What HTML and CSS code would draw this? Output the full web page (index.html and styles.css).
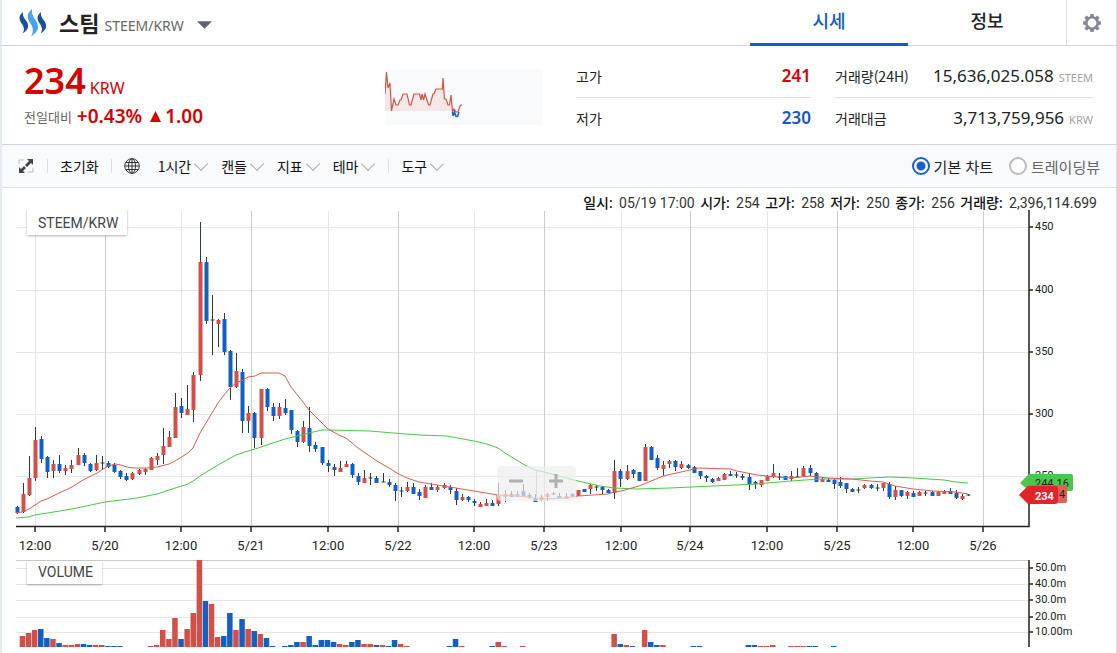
FILE: index.html
```html
<!DOCTYPE html>
<html lang="ko">
<head>
<meta charset="utf-8">
<title>스팀 STEEM/KRW</title>
<link rel="stylesheet" href="styles.css">
</head>
<body>
<main class="panel">
  <header class="head">
    <button class="coin" type="button">
      <svg class="coin-logo" viewBox="0 0 28 28" aria-hidden="true">
        <path fill="#1a5099" d="M4 3C-1 7 0 11 3 15c2.500 3.500 2.500 6.500.5 9.500 6.500-4 7-8 3.500-13C4.500 8.500 3.500 6 4 3zM22 3c-5 4-4 8-1 12 2.500 3.500 2.500 6.500.5 9.500 6.500-4 7-8 3.500-13C22.500 8.500 21.500 6 22 3z"/>
        <path fill="#4ba2f2" d="M13 0C7 4.500 8 9.500 11.500 14.500c3 4.500 3 9 .5 13 8-5 8.500-10.500 4.500-16.500C13.500 7 12.500 4 13 0z"/>
      </svg>
      <strong class="coin-name">스팀</strong>
      <span class="coin-pair">STEEM/KRW</span>
      <svg class="coin-arrow" viewBox="0 0 16 8" aria-hidden="true"><path d="M0 0h16L8 8z"/></svg>
    </button>
    <nav class="tabs">
      <a class="tab tab-on" href="#price">시세</a>
      <a class="tab" href="#info">정보</a>
    </nav>
    <button class="gear" type="button" aria-label="설정">
      <svg viewBox="0 0 20 20" aria-hidden="true">
        <path fill="#858993" fill-rule="evenodd" d="M8.400 1h3.200l.4 2.400 1.400.6 2-1.500 2.200 2.200L16.100 6.700l.6 1.400 2.300.400v3.100l-2.300.400-.6 1.400 1.500 2-2.200 2.200-2-1.500-1.400.6-.4 2.300H8.400L8 16.700l-1.400-.6-2 1.500-2.200-2.200 1.500-2-.6-1.400L1 11.600V8.500l2.300-.400.6-1.400-1.500-2 2.200-2.200 2 1.500L8 3.400zM10 5.600a4.400 4.400 0 1 0 0 8.800 4.400 4.400 0 0 0 0-8.800z"/>
      </svg>
    </button>
  </header>

  <section class="summary">
    <div class="price">
      <p class="price-now"><strong>234</strong><span>KRW</span></p>
      <p class="price-diff"><span>전일대비</span><strong>+0.43%</strong><svg viewBox="0 0 11 11" aria-hidden="true"><path d="M5.500 0L11 11H0z"/></svg><strong>1.00</strong></p>
    </div>
    <svg class="spark" viewBox="0 0 157 56" aria-hidden="true">
      <path fill="#f5e7e6" d="M0 42V25L1.500 3 3 19l2-5 1.500 28L9 30l2 6h2l2-5h1l2-6h3l3 11h1l3-11h5l1.500 6 1-6 1.500 6 1.500-6 4 11h1l3-10h1l2-6h6l2-11 2 22h1l2 5h2l2-11 1.500 17z"/>
      <path fill="none" stroke="#cf5449" stroke-width="1.200" d="M0 25L1.500 3 3 19l2-5 1.500 28L9 30l2 6h2l2-5h1l2-6h4l2.500 11h1.500l3-11h5.500l1.500 6 1-6 1.500 6 1.500-6 3.500 11h1.500l3-11h1l2-5h6.500L58 9l1.500 21H61l2 6h1.500L66 26l1.500 17 1.500-3 2 3h2l2-6 1-1h1"/>
      <path fill="none" stroke="#1767cc" stroke-width="1.500" d="M67.500 43l.5 4 1.500-4 1.500 4.500h1.500L74 43"/>
    </svg>
    <dl class="range">
      <div><dt>고가</dt><dd class="up">241</dd></div>
      <div><dt>저가</dt><dd class="down">230</dd></div>
    </dl>
    <dl class="turnover">
      <div><dt>거래량(24H)</dt><dd>15,636,025.058<small>STEEM</small></dd></div>
      <div><dt>거래대금</dt><dd>3,713,759,956<small>KRW</small></dd></div>
    </dl>
  </section>

  <div class="tools">
    <button class="icon-btn" type="button" aria-label="전체 화면">
      <svg width="16" height="14" viewBox="0 0 16 14" aria-hidden="true">
        <path fill="none" stroke="#bbb" d="M1 5V1h5M15 9v4h-5"/>
        <path fill="#444" d="M9 0h6v6l-2-2-4 4-2-2 4-4zM7 14H1V8l2 2 3-3 2 2-3 3z"/>
      </svg>
    </button>
    <button class="tool-btn reset" type="button">초기화</button>
    <button class="icon-btn globe" type="button" aria-label="시간대">
      <svg width="16" height="16" viewBox="0 0 16 16" fill="none" stroke="#333" aria-hidden="true">
        <circle cx="8" cy="8" r="7.300"/><ellipse cx="8" cy="8" rx="3.500" ry="7.300"/><path d="M8 1v14M1 8h14M2 4.500h12M2 11.500h12"/>
      </svg>
    </button>
    <button class="tool-btn menu" type="button">1시간</button>
    <button class="tool-btn menu" type="button">캔들</button>
    <button class="tool-btn menu" type="button">지표</button>
    <button class="tool-btn menu" type="button">테마</button>
    <button class="tool-btn menu draw" type="button">도구</button>
    <fieldset class="modes">
      <label><input type="radio" name="mode" checked><span>기본 차트</span></label>
      <label class="mode-off"><input type="radio" name="mode"><span>트레이딩뷰</span></label>
    </fieldset>
  </div>

  <section class="chart">
    <p class="ohlc"><b>일시:</b> <span>05/19 17:00</span> <b>시가:</b> <span>254</span> <b>고가:</b> <span>258</span> <b>저가:</b> <span>250</span> <b>종가:</b> <span>256</span> <b>거래량:</b> <span>2,396,114.699</span></p>
    <div class="plot">
      <svg id="plot" viewBox="2 210 1114 437" role="img" aria-label="STEEM/KRW 차트"></svg>
      <div class="zoom">
        <button type="button" aria-label="축소"><svg viewBox="0 0 16 16" aria-hidden="true"><path d="M1 8h14"/></svg></button>
        <button type="button" aria-label="확대"><svg viewBox="0 0 16 16" aria-hidden="true"><path d="M1 8h14M8 1v14"/></svg></button>
      </div>
    </div>
  </section>
</main>
<script src="chart.js"></script>
</body>
</html>
```

FILE: styles.css
```css
* { box-sizing: border-box; }

body {
  margin: 0;
  font-family: "Noto Sans", "Noto Sans CJK KR", sans-serif;
  color: #222;
  background: #fff;
}

p, dl, dd { margin: 0; }

button {
  padding: 0;
  border: 0;
  background: none;
  font: inherit;
  color: inherit;
}

.panel {
  min-height: 100vh;
  border-left: 2px solid #e6e9ef;
  border-right: 1px solid #dfe1e8;
}

/* Header */
.head {
  display: flex;
  height: 46px;
  border-bottom: 1px solid #d2d4dc;
}

.coin {
  display: flex;
  align-items: center;
  margin-right: auto;
  padding-left: 17px;
}

.coin-logo { width: 28px; height: 28px; }

.coin-name {
  margin: -2px 0 0 12px;
  font-family: "Noto Sans CJK KR", sans-serif;
  font-size: 22px;
  line-height: 32px;
}

.coin-pair {
  margin: 6px 13px 0 5px;
  font-size: 14px;
  color: #666;
}

.coin-arrow {
  width: 15px;
  height: 8px;
  margin-top: 4px;
  fill: #5d6372;
}

.tabs { display: flex; }

.tab {
  width: 158px;
  height: 45px;
  font-family: "Noto Sans CJK KR", sans-serif;
  font-size: 18px;
  font-weight: 500;
  line-height: 40px;
  text-align: center;
  text-decoration: none;
  color: #222;
}

.tab-on {
  height: 46px;
  color: #115dcb;
  border-bottom: 3px solid #115dcb;
}

.gear {
  width: 50px;
  border-left: 1px solid #dfe0e7;
}

.gear svg {
  display: block;
  width: 20px;
  height: 20px;
  margin: 0 auto;
}

/* Summary */
.summary {
  display: grid;
  grid-template-columns: 337px 157px 235px 258px;
  grid-template-columns: minmax(0, 361px) 157px 235px 258px;
  column-gap: 24px;
  height: 99px;
  padding: 10px 23px 0 22px;
  border-bottom: 1px solid #d2d4dc;
}

.price { color: #d60000; }

.price-now {
  display: flex;
  align-items: baseline;
  gap: 4px;
  height: 49px;
  line-height: 50px;
}

.price-now strong { font-size: 36px; font-weight: 600; }
.price-now span { font-size: 16px; }

.price-diff {
  display: flex;
  align-items: center;
  height: 22px;
}

.price-diff span { margin-right: 5px; font-size: 13px; color: #666; }
.price-diff strong { font-size: 19px; font-weight: 600; line-height: 22px; }
.price-diff svg { width: 11px; height: 11px; margin: 0 4px 0 8px; fill: #d60000; }

.summary {
  grid-template-columns: 337px 157px 235px 258px;
  column-gap: 0;
  justify-content: normal;
  display: flex;
}

.price { flex: 1; }

.spark {
  width: 157px;
  height: 56px;
  margin: 13px 34px 0 0;
  background: #f9fafc;
}

.range { width: 235px; margin-right: 24px; }
.turnover { width: 258px; }

dl div {
  display: flex;
  align-items: center;
  justify-content: space-between;
  height: 41px;
}

dl div:first-child {
  height: 42px;
  padding-bottom: 2px;
  border-bottom: 1px solid #e1e2e8;
}

dt {
  font-family: "Noto Sans CJK KR", sans-serif;
  font-size: 14px;
}

dl div:last-child { height: 39px; }

dd { font-size: 17px; }
dd small { margin-left: 5px; font-size: 11px; color: #a2a2a2; }

.up, .down { font-weight: 600; }
.up { color: #d60000; }
.down { color: #1757c6; }

/* Toolbar */
.tools {
  display: flex;
  align-items: center;
  height: 43px;
  padding: 0 16px;
  background: #f9fafc;
  border-bottom: 1px solid #dcdee5;
}

.icon-btn { height: 16px; }
.icon-btn svg { display: block; }

.tool-btn {
  font-family: "Noto Sans CJK KR", sans-serif;
  font-size: 14px;
  line-height: 14px;
  color: #111;
}

.reset {
  margin: 0 12px 0 13px;
  padding: 0 12px;
  border: solid #dcdee3;
  border-width: 0 1px;
}

.globe { margin-right: 18px; }

.menu {
  display: flex;
  align-items: center;
  gap: 5px;
  margin-right: 15px;
}

.menu::after {
  content: "";
  width: 9px;
  height: 9px;
  margin-top: -5px;
  border: solid #aaa;
  border-width: 0 1px 1px 0;
  transform: rotate(45deg);
}

.draw { padding-left: 12px; border-left: 1px solid #dcdee3; }

.modes {
  display: flex;
  gap: 16px;
  margin: 0 0 0 auto;
  padding: 0;
  border: 0;
}

.modes label {
  display: flex;
  align-items: center;
  gap: 4px;
  font-family: "Noto Sans CJK KR", sans-serif;
  font-size: 15px;
}

.modes input {
  appearance: none;
  width: 18px;
  height: 18px;
  margin: 0;
  border: 2px solid #bbb;
  border-radius: 50%;
  background: #fff;
}

.modes input:checked {
  border-color: #1a5fcd;
  background: radial-gradient(circle, #1a5fcd 4px, #fff 5px);
}

.mode-off { color: #666; }

/* Chart */
.ohlc {
  height: 22px;
  padding: 5px 19px 0 0;
  font-family: Roboto, "Noto Sans CJK KR", sans-serif;
  font-size: 14px;
  line-height: 20px;
  text-align: right;
  color: #333;
}

.ohlc b { font-weight: 500; color: #111; }
.ohlc span { margin: 0 2px 0 3px; }
.ohlc span:last-child { margin-right: 0; }

.plot { position: relative; }
.plot > svg { display: block; width: 100%; }

.zoom {
  position: absolute;
  top: 58.5%;
  left: 44.4%;
  display: flex;
  width: 79px;
  height: 35px;
  padding: 4px 0;
  border-radius: 4px;
  background: rgba(238, 238, 238, 0.7);
}

.zoom button { flex: 1; padding-bottom: 5px; }
.zoom button + button { border-left: 1px solid #ddd; }
.zoom svg { display: block; width: 16px; height: 16px; margin: 0 auto; }
.zoom path { stroke: #999; stroke-opacity: 0.75; stroke-width: 3; }

.grid { stroke: #e6e6e6; stroke-width: 1; }
.grid-day { stroke: #cccccc; stroke-width: 1; }
.axis { stroke: #222; stroke-width: 1.500; fill: none; }
.red { fill: #d25047; }
.blue { fill: #1260c4; }
.wick { stroke: #2c3a3c; stroke-width: 1; }
.line-red { fill: none; stroke: #df5b53; stroke-width: 1; }
.line-green { fill: none; stroke: #45c947; stroke-width: 1; }

.time, .value, .tag, .title { font-family: Roboto, sans-serif; fill: #222; }
.time { font-size: 13px; text-anchor: middle; }
.value, .tag { font-size: 11px; }
.title { font-size: 14px; fill: #444; }
.tag-now { font-weight: 700; fill: #fff; }
.caption { fill: #fff; filter: drop-shadow(0 1px 1px rgba(0, 0, 0, 0.3)); }
```

FILE: chart.js
```js
// Candles: colour (r up, b down, d flat), wick top, body top, body bottom, wick bottom.
const candles = `b 506 507 513 514|r 483 494 512 513|r 456 478 495 496|r 427 440 478 481|b 436 439 459 463|b 456 457 472 478|r 460 464 471 478|b 455 464 471 473|r 465 468 471 475|r 460 465 469 473
r 448 455 465 465|b 453 455 463 466|b 463 464 471 472|r 455 463 470 471|d 456 463 463 469|b 461 463 467 468|b 463 465 472 473|b 470 471 477 479|b 473 476 480 481|r 472 473 479 480
r 469 470 474 475|r 468 469 472 475|r 457 458 470 470|r 453 456 460 465|r 428 446 455 464|r 431 437 447 447|r 393 407 438 438|b 398 406 413 418|r 385 409 415 415|r 372 375 410 422
r 222 262 375 381|b 257 262 321 324|d 295 320 320 355|r 319 320 324 347|b 313 319 352 355|b 350 351 387 400|r 353 371 387 388|b 369 372 421 433|r 406 413 421 433|b 412 413 438 448
r 389 389 438 445|b 388 389 407 411|b 403 407 416 421|r 403 407 416 419|b 399 408 413 415|b 410 410 430 434|b 430 431 442 447|r 421 427 442 443|b 407 428 446 452|b 442 445 449 452
b 447 447 463 465|b 460 463 466 472|b 464 467 470 476|r 461 468 472 472|r 461 464 467 467|b 463 464 475 478|b 473 476 482 485|r 470 478 483 483|d 473 478 478 485|b 476 478 483 483
d 473 482 482 482|b 479 482 485 487|b 483 485 491 501|d 487 491 491 497|r 482 487 491 492|b 483 487 494 494|b 489 492 496 500|r 485 487 498 498|b 483 487 490 490|r 485 487 490 492
r 483 485 488 489|b 485 487 490 494|b 488 491 500 505|r 494 497 500 501|b 496 497 500 502|b 499 501 503 506|r 502 504 507 507|r 499 503 506 506|b 500 503 506 506|r 483 495 504 506
r 490 494 497 502|b 491 494 497 497|r 491 494 497 497|b 484 491 496 496|b 493 495 497 499|b 494 498 502 502|r 495 497 500 501|r 493 494 497 501|d 492 494 494 495|b 493 496 498 498
r 493 496 499 499|b 493 494 497 497|r 490 490 496 496|b 489 489 492 492|r 484 485 489 494|d 485 487 487 491|b 486 487 490 494|b 489 490 493 493|r 460 471 493 499|b 469 471 479 487
r 465 471 479 480|b 469 470 474 478|b 472 472 481 481|r 444 447 481 481|b 446 447 460 460|b 455 458 468 470|r 461 465 469 476|r 460 461 464 468|b 460 461 467 471|r 461 464 468 469
b 464 465 468 469|b 466 467 473 473|b 471 471 476 479|b 475 476 478 482|b 478 479 482 483|r 477 478 481 481|r 473 474 480 480|b 471 474 476 476|d 472 475 475 478|b 474 476 478 480
b 474 477 484 490|b 481 482 484 489|r 480 480 485 487|r 475 476 481 481|r 464 473 477 478|d 473 477 477 480|b 476 476 480 480|r 471 476 479 481|d 468 477 477 477|r 466 468 476 477
b 465 468 473 476|b 472 473 482 482|r 477 479 482 482|b 478 480 482 482|b 479 480 484 489|b 477 482 486 488|b 483 483 489 493|b 488 489 492 492|d 487 490 490 493|r 484 485 488 489
b 484 485 488 489|d 484 488 488 491|r 483 483 488 491|b 482 484 497 499|r 486 490 497 500|b 490 490 496 497|r 491 492 496 499|b 491 493 497 497|r 491 492 496 496|d 491 493 493 496
b 491 492 496 496|r 491 492 496 496|r 490 491 494 494|b 488 491 494 494|b 490 493 498 499|r 494 496 499 500|d 494 495 495 496`.split(/[|\n]/).map(row => row.split(' '));

// Volume bars: candle index, colour, height.
const volumes = '1r11 2r14 3r17 4b18 5b9 6r8 7b4 8r2 9r2 10r3 11b3 12b2 13r2 14r2 15b1 16b1 17b1 22r1 23r2 24r17 25r8 26r29 27b8 28r18 29r34 30r87 31b46 32r43 33r10 34b11 35b34 36r17 37b28 38r18 39b16 40r13 41b9 42b1 44b1 45b2 46b5 47r5 48b11 49b2 50b7 51b7 52b5 53r3 54r2 55b5 56b7 57r3 58r3 59b2 60r2 61b1 62b7 63r3 64r1 71b1 72b8 73r1 78b1 79r5 80r1 83r1 98r13 99b3 100r2 101b1 103r17 104b5 105b2 106r2 111b1 112b1 120b2 121b2 122r1 123r1 124r2 127r1 128r1 129r1 130b1 131b1 134b1'.split(' ');

const shortAverage = '16,513 22,512 29,509 35,505 41,501 47,499 57,494 72,487 83,480 97,473 108,466 115,464 121,465 127,467 133,468 147,468 157,467 169,464 175,461 188,453 193,448 200,433 212,413 218,403 224,395 230,388 236,383 243,380 248,377 255,376 261,373 279,373 285,376 291,387 303,402 309,410 317,418 328,429 339,435 346,438 358,448 377,461 389,468 397,473 407,478 419,482 437,485 450,487 462,489 480,492 498,495 517,496 528,497 541,499 566,498 578,496 593,495 608,494 614,492 621,491 639,486 644,484 663,476 681,472 694,469 699,468 730,469 737,471 757,475 767,476 778,477 791,478 810,476 828,478 852,479 870,481 883,482 895,486 913,489 933,491 956,492 968,494';
const longAverage = '16,518 28,517 35,515 72,509 105,502 137,498 157,494 169,490 188,484 193,481 200,476 218,465 236,455 248,451 255,449 261,447 285,439 309,433 322,430 328,430 370,431 393,433 420,435 447,436 463,439 474,441 487,444 498,448 505,453 523,464 535,470 544,472 566,478 578,481 600,486 614,488 637,489 670,488 757,484 767,483 791,481 820,479 852,479 870,478 890,477 913,478 944,480 956,482 968,483';

const days = [['12:00', 35], ['5/20', 105], ['12:00', 181], ['5/21', 251], ['12:00', 328], ['5/22', 398], ['12:00', 474], ['5/23', 544], ['12:00', 621], ['5/24', 690], ['12:00', 767], ['5/25', 837], ['12:00', 913], ['5/26', 983]];
const prices = [[450, 227], [400, 290], [350, 352], [300, 414], [250, 476]];
const amounts = [['50.0m', 568], ['40.0m', 584], ['30.0m', 600], ['20.0m', 617], ['10.00m', 632]];

const left = 16, right = 1029, bottom = 526, volumeTop = 560, base = 647, step = 6.1;
const out = [];
const line = (cls, x1, y1, x2, y2) => out.push(`<path class="${cls}" d="M${x1} ${y1}L${x2} ${y2}"/>`);
const text = (cls, x, y, value) => out.push(`<text class="${cls}" x="${x}" y="${y}">${value}</text>`);
const colour = { r: 'red', b: 'blue', d: 'wick' };

prices.forEach(([, y]) => line('grid', left, y + 0.5, right, y + 0.5));
amounts.forEach(([, y]) => line('grid', left, y + 0.5, right, y + 0.5));
days.forEach(([label, x]) => line(label.includes('/') ? 'grid-day' : 'grid', x + 0.5, 211, x + 0.5, bottom));
line('grid-day', left, volumeTop + 0.5, right, volumeTop + 0.5);

candles.forEach(([kind, high, top, end, low], i) => {
  const x = Math.floor(17 + i * step) + 0.5;
  line('wick', x, high, x, low);
  if (kind === 'd') line('wick', x - 2, top, x + 2, top);
  else out.push(`<rect class="${colour[kind]}" x="${x - 2}" y="${top}" width="4" height="${Math.max(2, end - top)}" rx="0.5"/>`);
});

volumes.forEach(item => {
  const [, i, kind, height] = item.match(/(\d+)([rb])(\d+)/);
  out.push(`<rect class="${colour[kind]}" x="${(13.6 + i * step).toFixed(1)}" y="${base - height}" width="5.5" height="${height}"/>`);
});

out.push(`<polyline class="line-green" points="${longAverage}"/><polyline class="line-red" points="${shortAverage}"/>`);

out.push(`<path class="axis" d="M${left} ${bottom + 0.5}H${right}V210M${right} ${volumeTop}V${base}"/>`);
days.forEach(([label, x]) => { line('axis', x, bottom, x, bottom + 6); text('time', x, 550, label); });
prices.forEach(([label, y]) => { line('axis', right, y, right + 4, y); text('value', 1035, y + 3, label); });
amounts.forEach(([label, y]) => { line('axis', right, y, right + 4, y); text('value', 1035, y + 3, label); });

out.push('<rect class="caption" x="27" y="208" width="100" height="27"/><rect class="caption" x="27" y="561" width="75" height="23"/>');
text('title', 38, 228, 'STEEM/KRW');
text('title', 38, 577, 'VOLUME');

out.push('<path fill="#4bc84b" d="M1020 483l9-9h42q2 0 2 2v13q0 2-2 2h-42z"/>');
text('tag', 1035, 487, '244.16');
out.push('<path fill="#dd6059" d="M1020 494l9-9h36q2 0 2 2v14q0 2-2 2h-36z"/>');
text('tag', 1059, 498, '4');
out.push('<path fill="#e3242b" d="M1019 495l9-9h27q3 0 3 3v12q0 3-3 3h-27z"/>');
text('tag tag-now', 1035, 500, '234');

document.getElementById('plot').innerHTML = out.join('');
```
